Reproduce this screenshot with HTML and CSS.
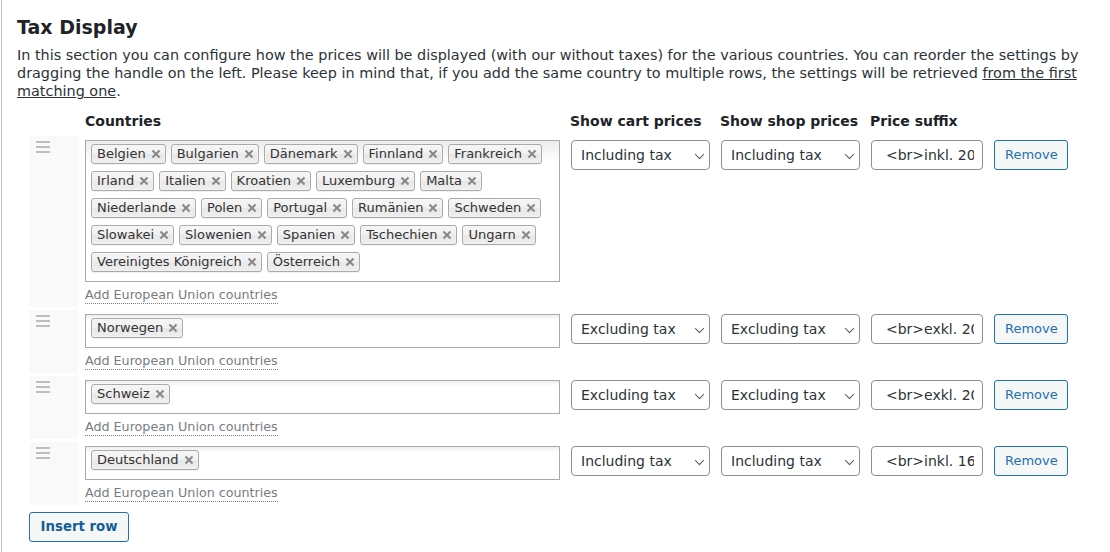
FILE: index.html
```html
<!DOCTYPE html>
<html lang="en">
<head>
<meta charset="utf-8">
<title>Tax Display</title>
<link rel="stylesheet" href="styles.css">
</head>
<body>
<div class="wrap">
  <h2 class="title">Tax Display</h2>
  <p class="desc">In this section you can configure how the prices will be displayed (with our without taxes) for the various countries. You can reorder the settings by dragging the handle on the left. Please keep in mind that, if you add the same country to multiple rows, the settings will be retrieved <a href="#" class="plain-link">from the first matching one</a>.</p>

  <div class="tax-table">
    <div class="thead">
      <div></div>
      <div class="th th-countries">Countries</div>
      <div class="th">Show cart prices</div>
      <div class="th">Show shop prices</div>
      <div class="th">Price suffix</div>
      <div></div>
    </div>

    <div class="trow">
      <div class="handle"><svg width="14" height="12" viewBox="0 0 14 12"><path d="M0 1h14M0 6h14M0 11h14" stroke="#a7aaad" stroke-width="1.6"/></svg></div>
      <div class="countries">
        <div class="tagbox">
          <span class="tag">Belgien<i class="x"></i></span>
          <span class="tag">Bulgarien<i class="x"></i></span>
          <span class="tag">Dänemark<i class="x"></i></span>
          <span class="tag">Finnland<i class="x"></i></span>
          <span class="tag">Frankreich<i class="x"></i></span>
          <span class="tag">Irland<i class="x"></i></span>
          <span class="tag">Italien<i class="x"></i></span>
          <span class="tag">Kroatien<i class="x"></i></span>
          <span class="tag">Luxemburg<i class="x"></i></span>
          <span class="tag">Malta<i class="x"></i></span>
          <span class="tag">Niederlande<i class="x"></i></span>
          <span class="tag">Polen<i class="x"></i></span>
          <span class="tag">Portugal<i class="x"></i></span>
          <span class="tag">Rumänien<i class="x"></i></span>
          <span class="tag">Schweden<i class="x"></i></span>
          <span class="tag">Slowakei<i class="x"></i></span>
          <span class="tag">Slowenien<i class="x"></i></span>
          <span class="tag">Spanien<i class="x"></i></span>
          <span class="tag">Tschechien<i class="x"></i></span>
          <span class="tag">Ungarn<i class="x"></i></span>
          <span class="tag">Vereinigtes Königreich<i class="x"></i></span>
          <span class="tag">Österreich<i class="x"></i></span>
        </div>
        <a href="#" class="eu-link">Add European Union countries</a>
      </div>
      <div class="cell"><div class="select">Including tax<i class="chev"></i></div></div>
      <div class="cell"><div class="select">Including tax<i class="chev"></i></div></div>
      <div class="cell"><div class="input"><span>&lt;br&gt;inkl. 20% MwSt.</span></div></div>
      <div class="cell"><button class="btn">Remove</button></div>
    </div>

    <div class="trow">
      <div class="handle"><svg width="14" height="12" viewBox="0 0 14 12"><path d="M0 1h14M0 6h14M0 11h14" stroke="#a7aaad" stroke-width="1.6"/></svg></div>
      <div class="countries">
        <div class="tagbox"><span class="tag">Norwegen<i class="x"></i></span></div>
        <a href="#" class="eu-link">Add European Union countries</a>
      </div>
      <div class="cell"><div class="select">Excluding tax<i class="chev"></i></div></div>
      <div class="cell"><div class="select">Excluding tax<i class="chev"></i></div></div>
      <div class="cell"><div class="input"><span>&lt;br&gt;exkl. 20% MwSt.</span></div></div>
      <div class="cell"><button class="btn">Remove</button></div>
    </div>

    <div class="trow">
      <div class="handle"><svg width="14" height="12" viewBox="0 0 14 12"><path d="M0 1h14M0 6h14M0 11h14" stroke="#a7aaad" stroke-width="1.6"/></svg></div>
      <div class="countries">
        <div class="tagbox"><span class="tag">Schweiz<i class="x"></i></span></div>
        <a href="#" class="eu-link">Add European Union countries</a>
      </div>
      <div class="cell"><div class="select">Excluding tax<i class="chev"></i></div></div>
      <div class="cell"><div class="select">Excluding tax<i class="chev"></i></div></div>
      <div class="cell"><div class="input"><span>&lt;br&gt;exkl. 20% MwSt.</span></div></div>
      <div class="cell"><button class="btn">Remove</button></div>
    </div>

    <div class="trow">
      <div class="handle"><svg width="14" height="12" viewBox="0 0 14 12"><path d="M0 1h14M0 6h14M0 11h14" stroke="#a7aaad" stroke-width="1.6"/></svg></div>
      <div class="countries">
        <div class="tagbox"><span class="tag">Deutschland<i class="x"></i></span></div>
        <a href="#" class="eu-link">Add European Union countries</a>
      </div>
      <div class="cell"><div class="select">Including tax<i class="chev"></i></div></div>
      <div class="cell"><div class="select">Including tax<i class="chev"></i></div></div>
      <div class="cell"><div class="input"><span>&lt;br&gt;inkl. 16% MwSt.</span></div></div>
      <div class="cell"><button class="btn">Remove</button></div>
    </div>
  </div>

  <button class="btn btn-insert">Insert row</button>
</div>
</body>
</html>
```

FILE: styles.css
```css
html, body {
  margin: 0;
  padding: 0;
  background: #fff;
}
body {
  font-family: "DejaVu Sans", Verdana, sans-serif;
  font-size: 13px;
  line-height: 18px;
  color: #3c434a;
}
.wrap {
  margin-left: 1px;
  border-left: 1px solid #c3c4c7;
  padding: 15px 0 0 15px;
  min-height: 552px;
  box-sizing: border-box;
}
.title {
  margin: 0;
  font-size: 19px;
  line-height: 24px;
  font-weight: bold;
  color: #1d2327;
}
.desc {
  margin: 7px 0 0;
  padding-right: 14px;
  font-size: 14.4px;
  line-height: 18px;
  color: #2c3338;
}
.plain-link {
  color: #2c3338;
  text-decoration: underline;
}
.tax-table {
  margin: 12px 0 0 12px;
  display: flex;
  flex-direction: column;
  gap: 3px;
}
.thead, .trow {
  display: grid;
  grid-template-columns: 49px 492px 150px 150px 124px 74px;
}
.thead {
  padding-bottom: 3px;
}
.th {
  font-weight: bold;
  font-size: 14px;
  color: #1d2327;
  line-height: 18px;
  white-space: nowrap;
}
.th-countries {
  padding-left: 7px;
}
.handle {
  background: #f9f9f9;
  padding: 5px 0 0 7px;
}
.handle svg {
  display: block;
}
.countries {
  padding: 4px 10px 3px 7px;
  display: flex;
  flex-direction: column;
  align-items: flex-start;
}
.tagbox {
  align-self: stretch;
  border: 1px solid #aaa;
  background: linear-gradient(to bottom, #eee 1%, #fff 15%);
  padding: 3px 5px 9px;
  display: flex;
  flex-wrap: wrap;
  gap: 7px 5px;
}
.tag {
  display: inline-flex;
  align-items: center;
  height: 20px;
  box-sizing: border-box;
  padding: 0 5px;
  border: 1px solid #aaa;
  border-radius: 3px;
  color: #333;
  background-color: #e4e4e4;
  background-image: linear-gradient(to bottom, #f4f4f4 20%, #f0f0f0 50%, #e8e8e8 52%, #eee 100%);
  box-shadow: 0 0 2px #fff inset, 0 1px 0 rgba(0,0,0,0.05);
  white-space: nowrap;
}
.x {
  display: inline-block;
  width: 8px;
  height: 8px;
  margin-left: 6px;
  position: relative;
}
.x::before, .x::after {
  content: "";
  position: absolute;
  left: -1px;
  top: 3px;
  width: 10px;
  height: 2px;
  background: #888;
  transform: rotate(45deg);
}
.x::after {
  transform: rotate(-45deg);
}
.eu-link {
  margin-top: 4px;
  font-size: 12.7px;
  color: #787c82;
  text-decoration: none;
  border-bottom: 1px dotted #787c82;
  line-height: 17px;
}
.cell {
  padding-top: 4px;
}
.select {
  margin-left: 1px;
  width: 139px;
  height: 30px;
  box-sizing: border-box;
  border: 1px solid #8c8f94;
  border-radius: 4px;
  padding: 0 24px 0 9px;
  font-size: 14px;
  line-height: 28px;
  color: #2c3338;
  position: relative;
  background: #fff;
}
.chev {
  position: absolute;
  right: 6px;
  top: 12px;
  width: 7px;
  height: 7px;
  border-right: 1.5px solid #50575e;
  border-bottom: 1.5px solid #50575e;
  transform: translateY(-2px) rotate(45deg) scale(0.95);
  box-sizing: border-box;
}
.input {
  margin-left: 1px;
  width: 112px;
  height: 30px;
  box-sizing: border-box;
  border: 1px solid #8c8f94;
  border-radius: 4px;
  padding: 0 8px 0 14px;
  font-size: 14px;
  line-height: 28px;
  color: #2c3338;
  overflow: hidden;
  white-space: nowrap;
}
.input span {
  display: block;
  overflow: hidden;
}
.btn {
  font-family: "DejaVu Sans", Verdana, sans-serif;
  font-size: 13px;
  height: 30px;
  box-sizing: border-box;
  padding: 0 10px;
  border: 1px solid #2271b1;
  border-radius: 3px;
  background: #f6f7f7;
  color: #2271b1;
  line-height: 28px;
  cursor: pointer;
  width: 74px;
  white-space: nowrap;
}
.btn-insert {
  display: block;
  margin: 7px 0 0 12px;
  width: 100px;
  padding: 0;
  text-align: center;
  font-weight: bold;
  font-size: 13.3px;
  color: #135e96;
}
```
